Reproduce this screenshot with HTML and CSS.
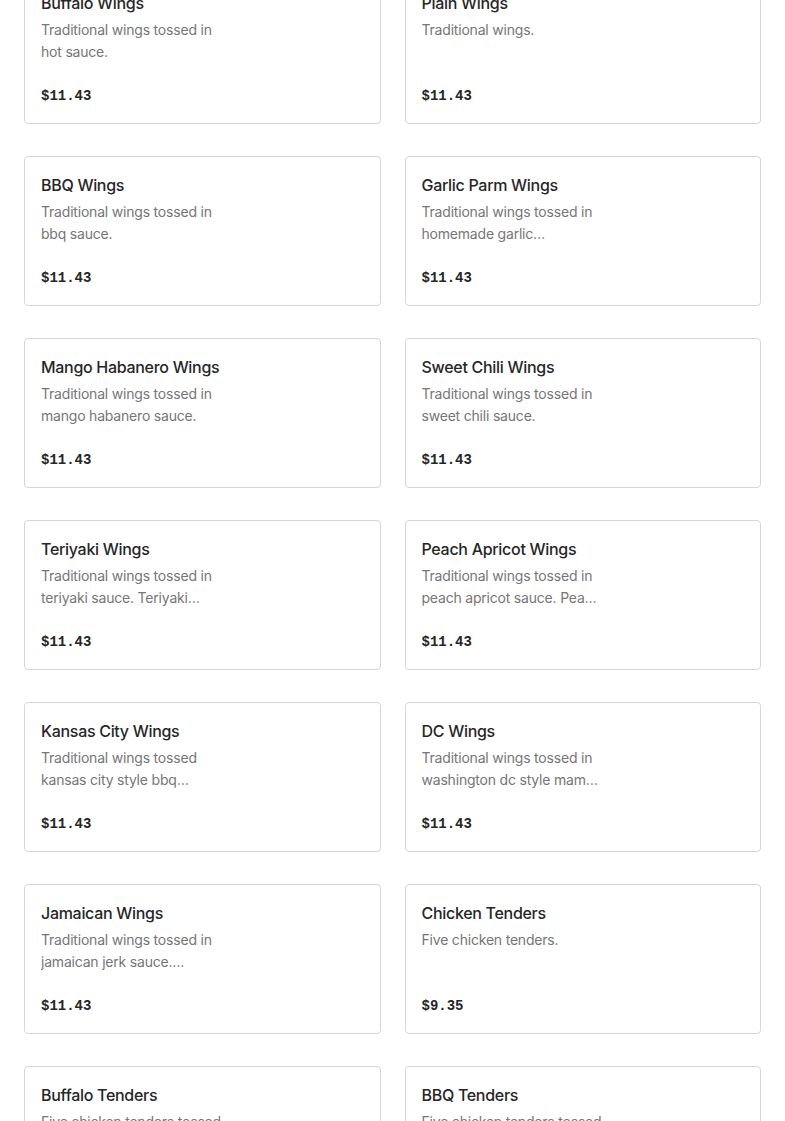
FILE: index.html
```html
<!DOCTYPE html>
<html lang="en">
<head>
<meta charset="utf-8">
<title>Menu</title>
<link rel="stylesheet" href="styles.css">
</head>
<body>
<main class="menu-grid">
  <div class="item"><h3 class="item-name">Buffalo Wings</h3><p class="item-desc">Traditional wings tossed in hot sauce.</p><div class="item-price">$11.43</div></div>
  <div class="item"><h3 class="item-name">Plain Wings</h3><p class="item-desc">Traditional wings.</p><div class="item-price">$11.43</div></div>
  <div class="item"><h3 class="item-name">BBQ Wings</h3><p class="item-desc">Traditional wings tossed in bbq sauce.</p><div class="item-price">$11.43</div></div>
  <div class="item"><h3 class="item-name">Garlic Parm Wings</h3><p class="item-desc">Traditional wings tossed in homemade garlic…</p><div class="item-price">$11.43</div></div>
  <div class="item"><h3 class="item-name">Mango Habanero Wings</h3><p class="item-desc">Traditional wings tossed in mango habanero sauce.</p><div class="item-price">$11.43</div></div>
  <div class="item"><h3 class="item-name">Sweet Chili Wings</h3><p class="item-desc">Traditional wings tossed in sweet chili sauce.</p><div class="item-price">$11.43</div></div>
  <div class="item"><h3 class="item-name">Teriyaki Wings</h3><p class="item-desc">Traditional wings tossed in teriyaki sauce. Teriyaki…</p><div class="item-price">$11.43</div></div>
  <div class="item"><h3 class="item-name">Peach Apricot Wings</h3><p class="item-desc">Traditional wings tossed in peach apricot sauce. Pea…</p><div class="item-price">$11.43</div></div>
  <div class="item"><h3 class="item-name">Kansas City Wings</h3><p class="item-desc">Traditional wings tossed kansas city style bbq…</p><div class="item-price">$11.43</div></div>
  <div class="item"><h3 class="item-name">DC Wings</h3><p class="item-desc">Traditional wings tossed in washington dc style mam…</p><div class="item-price">$11.43</div></div>
  <div class="item"><h3 class="item-name">Jamaican Wings</h3><p class="item-desc">Traditional wings tossed in jamaican jerk sauce.…</p><div class="item-price">$11.43</div></div>
  <div class="item"><h3 class="item-name">Chicken Tenders</h3><p class="item-desc">Five chicken tenders.</p><div class="item-price">$9.35</div></div>
  <div class="item"><h3 class="item-name">Buffalo Tenders</h3><p class="item-desc">Five chicken tenders tossed in buffalo sauce.</p><div class="item-price">$11.43</div></div>
  <div class="item"><h3 class="item-name">BBQ Tenders</h3><p class="item-desc">Five chicken tenders tossed in bbq sauce.</p><div class="item-price">$11.43</div></div>
</main>
</body>
</html>
```
FILE: styles.css
```css
html, body {
  margin: 0;
  padding: 0;
  background: #ffffff;
}
body {
  font-family: Inter, "Noto Sans", "Liberation Sans", sans-serif;
  overflow: hidden;
}
.menu-grid {
  display: grid;
  grid-template-columns: 1fr 1fr;
  column-gap: 24px;
  row-gap: 32px;
  padding: 0 24px;
  margin-top: -26px;
}
.item {
  box-sizing: border-box;
  height: 150px;
  border: 1px solid #d6d6d6;
  border-radius: 4px;
  padding: 16px;
  display: flex;
  flex-direction: column;
}
.item-name {
  margin: 0;
  font-size: 16px;
  line-height: 24px;
  font-weight: 500;
  color: #262626;
  letter-spacing: -0.3px;
}
.item-desc {
  margin: 4px 0 0;
  font-size: 14px;
  line-height: 22px;
  color: #767676;
  letter-spacing: -0.2px;
  max-width: 192px;
  height: 44px;
  overflow: hidden;
}
.item-price {
  margin-top: 22px;
  font-family: "Liberation Mono", "DejaVu Sans Mono", monospace;
  font-size: 14px;
  line-height: 22px;
  font-weight: 700;
  color: #262626;
}
```
